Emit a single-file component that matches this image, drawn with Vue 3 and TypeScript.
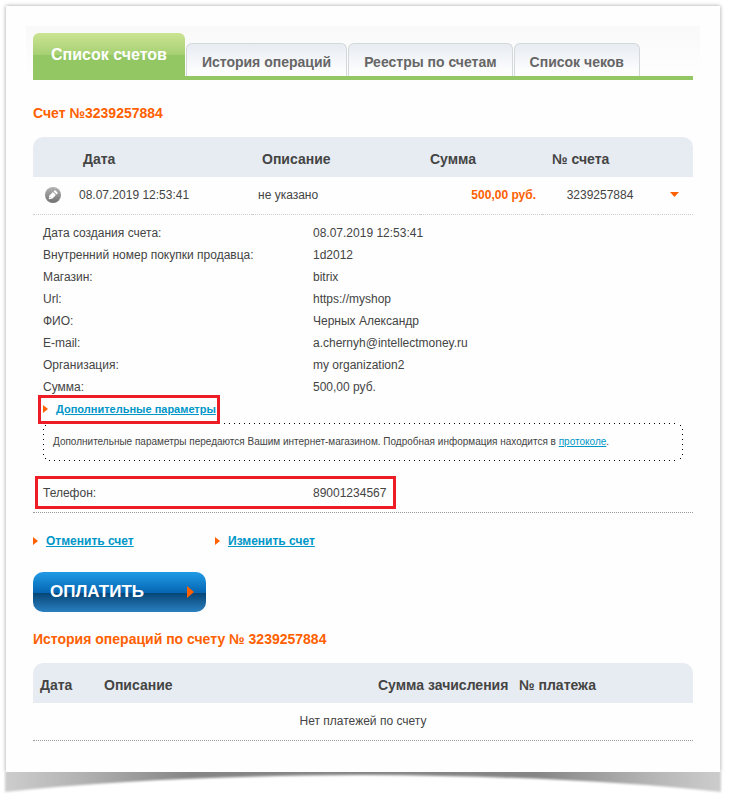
<script setup lang="ts">
import { ref } from 'vue'

interface Detail {
  label: string
  value: string
}

const tabs: string[] = ['Список счетов', 'История операций', 'Реестры по счетам', 'Список чеков']
const active = ref(0)
const open = ref(true)

const details: Detail[] = [
  { label: 'Дата создания счета:', value: '08.07.2019 12:53:41' },
  { label: 'Внутренний номер покупки продавца:', value: '1d2012' },
  { label: 'Магазин:', value: 'bitrix' },
  { label: 'Url:', value: 'https://myshop' },
  { label: 'ФИО:', value: 'Черных Александр' },
  { label: 'E-mail:', value: 'a.chernyh@intellectmoney.ru' },
  { label: 'Организация:', value: 'my organization2' },
  { label: 'Сумма:', value: '500,00 руб.' },
]
</script>

<template>
  <div class="page">
    <main class="sheet">
      <nav class="tabs">
        <button
          v-for="(tab, i) in tabs"
          :key="tab"
          type="button"
          class="tab"
          :class="{ active: i === active }"
          @click="active = i"
        >{{ tab }}</button>
      </nav>

      <div class="content">
        <h1 class="title">Счет №3239257884</h1>

        <table class="grid invoices">
          <colgroup>
            <col class="c-icon"><col><col class="c-desc"><col class="c-sum"><col class="c-num"><col class="c-arrow">
          </colgroup>
          <thead>
            <tr>
              <th></th>
              <th>Дата</th>
              <th>Описание</th>
              <th>Сумма</th>
              <th>№ счета</th>
              <th></th>
            </tr>
          </thead>
          <tbody>
            <tr>
              <td class="icon-cell">
                <button type="button" class="plain" aria-label="Редактировать">
                  <svg width="16" height="16" viewBox="0 0 16 16">
                    <defs>
                      <linearGradient id="disc" x1="0" y1="0" x2="0" y2="1">
                        <stop offset="0" stop-color="#b4b4b4" />
                        <stop offset="1" stop-color="#707070" />
                      </linearGradient>
                    </defs>
                    <circle cx="8" cy="8" r="8" fill="url(#disc)" />
                    <path d="M3.800 12.200l.4-3.400 3.700-3.700 3 3-3.700 3.700z" fill="#fff" />
                    <path d="M8.600 4.400l.9-.9q.5-.4 1 0l2 2q.4.500 0 1l-.9.900z" fill="#fff" />
                    <path d="M4.800 10.200l1 1" stroke="#8c8c8c" stroke-width=".8" />
                  </svg>
                </button>
              </td>
              <td>08.07.2019 12:53:41</td>
              <td>не указано</td>
              <td class="sum">500,00 руб.</td>
              <td class="num">3239257884</td>
              <td class="arrow-cell">
                <button type="button" class="plain" aria-label="Подробности" @click="open = !open">
                  <svg width="9" height="5" viewBox="0 0 9 5"><path d="M0 0h9L4.500 5z" fill="#ff6000" /></svg>
                </button>
              </td>
            </tr>
          </tbody>
        </table>

        <section v-if="open" class="details">
          <dl class="params">
            <div v-for="d in details" :key="d.label" class="param">
              <dt>{{ d.label }}</dt>
              <dd>{{ d.value }}</dd>
            </div>
          </dl>
          <div class="extra">
            <svg class="marker" width="5" height="8" viewBox="0 0 5 8"><path d="M0 0l5 4-5 4z" fill="#ff6000" /></svg>
            <a href="#extra">Дополнительные параметры</a>
            <span class="frame frame-link"></span>
          </div>
          <p class="note">Дополнительные параметры передаются Вашим интернет-магазином. Подробная информация находится в <a href="#protocol">протоколе</a>.</p>
          <div class="phone">
            <dl class="params">
              <div class="param">
                <dt>Телефон:</dt>
                <dd>89001234567</dd>
              </div>
            </dl>
            <span class="frame frame-phone"></span>
          </div>
        </section>

        <div class="actions">
          <div class="action">
            <svg class="marker" width="5" height="8" viewBox="0 0 5 8"><path d="M0 0l5 4-5 4z" fill="#ff6000" /></svg>
            <a href="#cancel">Отменить счет</a>
          </div>
          <div class="action">
            <svg class="marker" width="5" height="8" viewBox="0 0 5 8"><path d="M0 0l5 4-5 4z" fill="#ff6000" /></svg>
            <a href="#edit">Изменить счет</a>
          </div>
        </div>

        <button type="button" class="pay">
          <span>ОПЛАТИТЬ</span>
          <svg width="7" height="12" viewBox="0 0 7 12"><path d="M0 0l7 6-7 6z" fill="#ff6000" /></svg>
        </button>

        <h2 class="title history-title">История операций по счету № 3239257884</h2>

        <table class="grid history">
          <colgroup>
            <col class="h-date"><col><col class="h-sum"><col class="h-num">
          </colgroup>
          <thead>
            <tr>
              <th>Дата</th>
              <th>Описание</th>
              <th>Сумма зачисления</th>
              <th>№ платежа</th>
            </tr>
          </thead>
          <tbody>
            <tr>
              <td colspan="4" class="empty">Нет платежей по счету</td>
            </tr>
          </tbody>
        </table>
      </div>
    </main>

    <svg class="curl" viewBox="0 0 734 29" preserveAspectRatio="none" aria-hidden="true">
      <defs>
        <linearGradient id="curl-fill" x1="0" y1="0" x2="1" y2="0">
          <stop offset="0" stop-color="#cdcdcd" />
          <stop offset=".1" stop-color="#b4b4b4" />
          <stop offset=".26" stop-color="#858585" />
          <stop offset=".74" stop-color="#858585" />
          <stop offset=".9" stop-color="#b4b4b4" />
          <stop offset="1" stop-color="#cdcdcd" />
        </linearGradient>
        <filter id="curl-blur" x="-5%" y="-50%" width="110%" height="200%">
          <feGaussianBlur stdDeviation="1.300" />
        </filter>
      </defs>
      <path d="M5 -12H721V20Q576 4 363 3Q150 4 5 20z" fill="url(#curl-fill)" filter="url(#curl-blur)" />
    </svg>
  </div>
</template>

<style>
body {
  margin: 0;
  background: #fff;
}
</style>

<style scoped>
.page {
  padding: 6px 14px 0 6px;
  font: 12px/22px "Liberation Sans", Arial, sans-serif;
  color: #444;
}
.sheet {
  position: relative;
  z-index: 1;
  padding: 20px 20px 31px;
  background: #fefefe;
  box-shadow: 0 0 4px rgba(0, 0, 0, 0.38);
  clip-path: inset(-6px -8px 0 -6px);
}
.curl {
  display: block;
  width: calc(100% + 20px);
  height: 29px;
  margin: 0 -14px 0 -6px;
}
.tabs {
  display: flex;
  align-items: flex-end;
  gap: 1px;
  height: 50px;
  padding: 0 7px;
  background: linear-gradient(#f9f9f9, #fefefe);
  position: relative;
}
.tabs::after {
  content: "";
  position: absolute;
  left: 7px;
  right: 7px;
  top: 50px;
  height: 4px;
  background: #93c763;
}
.tab {
  box-sizing: border-box;
  height: 33px;
  margin: 0;
  padding: 3px 15px 0;
  border: 1px solid #d3d8da;
  border-bottom: 0;
  border-radius: 6px 6px 0 0;
  background: linear-gradient(#e7ecf2, #fdfdfe 85%);
  font: bold 14px/20px "Liberation Sans", Arial, sans-serif;
  color: #666;
  white-space: nowrap;
}
.tab.active {
  height: 43px;
  padding: 0 18px;
  border: 0;
  background: linear-gradient(#cbe492, #a6d073 22px, #93c763 22px);
  font-size: 16px;
  color: #fff;
}
.content {
  padding: 0 7px;
}
.title {
  margin: 0;
  padding-top: 26px;
  font-size: 14px;
  line-height: 22px;
  color: #ff6000;
}
.grid {
  width: 100%;
  border-collapse: separate;
  border-spacing: 0;
  table-layout: fixed;
}
.grid th {
  height: 40px;
  padding: 4px 0 0 10px;
  box-sizing: border-box;
  background: #e7ecf3;
  font-size: 14px;
  line-height: 20px;
  text-align: left;
  white-space: nowrap;
}
.grid th:first-child {
  border-top-left-radius: 10px;
}
.grid th:last-child {
  border-top-right-radius: 10px;
}
.grid td {
  height: 38px;
  padding: 0 6px 2px;
  box-sizing: border-box;
  border-bottom: 1px dotted #ccc;
}
.invoices {
  margin-top: 13px;
}
.c-icon { width: 40px; }
.c-desc { width: 168px; }
.c-sum { width: 122px; }
.c-num { width: 116px; }
.c-arrow { width: 35px; }
.grid .icon-cell,
.grid .arrow-cell {
  padding: 0 0 2px 12px;
}
.grid .sum {
  font-weight: bold;
  color: #ff6000;
  text-align: right;
}
.grid .num {
  text-align: center;
}
.plain {
  display: flex;
  padding: 0;
  border: 0;
  background: none;
}
.details {
  padding: 7px 10px 8px;
  border-bottom: 1px dotted #999;
}
.params {
  margin: 0;
}
.param {
  display: flex;
}
.param dt {
  width: 270px;
}
.param dd {
  margin: 0;
}
.marker {
  flex: none;
}
a {
  color: #0096c8;
}
.extra {
  position: relative;
  display: flex;
  align-items: center;
  gap: 8px;
  font-size: 11px;
  font-weight: bold;
}
.frame {
  position: absolute;
  box-sizing: border-box;
  border: 3px solid #ee1c24;
  pointer-events: none;
  z-index: 1;
}
.frame-link {
  left: -5px;
  top: -3px;
  width: 182px;
  height: 29px;
}
/* Sparse dotted outline: one dot every five pixels, plus a dot on each rounded corner */
.note {
  --h: repeating-linear-gradient(90deg, #000 0 1px, transparent 1px 5px);
  --v: repeating-linear-gradient(#000 0 1px, transparent 1px 5px);
  --dot: linear-gradient(#000, #000);
  margin: 3px 0 0;
  padding: 8px 10px;
  font-size: 10px;
  background:
    var(--h) center top / calc(100% - 12px) 1px no-repeat,
    var(--h) center bottom / calc(100% - 12px) 1px no-repeat,
    var(--v) left center / 1px calc(100% - 12px) no-repeat,
    var(--v) right center / 1px calc(100% - 12px) no-repeat,
    var(--dot) left 2px top 2px / 1px 1px no-repeat,
    var(--dot) right 2px top 2px / 1px 1px no-repeat,
    var(--dot) left 2px bottom 2px / 1px 1px no-repeat,
    var(--dot) right 2px bottom 2px / 1px 1px no-repeat;
}
.phone {
  position: relative;
  margin-top: 21px;
}
.frame-phone {
  left: -8px;
  top: -6px;
  width: 361px;
  height: 33px;
}
.actions {
  display: flex;
  padding-top: 17px;
}
.action {
  display: flex;
  align-items: center;
  gap: 8px;
  width: 182px;
  font-weight: bold;
}
.pay {
  display: flex;
  align-items: center;
  justify-content: space-between;
  width: 173px;
  height: 40px;
  margin-top: 20px;
  padding: 0 12px 0 17px;
  border: 0;
  border-radius: 10px;
  background: linear-gradient(#219be6, #0565b2 21px, #064576 21px, #2a80c0);
  font: bold 17px/22px "Liberation Sans", Arial, sans-serif;
  color: #fff;
}
.history-title {
  padding-top: 16px;
}
.history {
  margin-top: 13px;
}
.history th {
  padding: 4px 0 0 7px;
}
.history td {
  border-bottom-color: #999;
}
.h-date { width: 64px; }
.h-sum { width: 141px; }
.h-num { width: 181px; }
.grid .empty {
  text-align: center;
}
</style>
